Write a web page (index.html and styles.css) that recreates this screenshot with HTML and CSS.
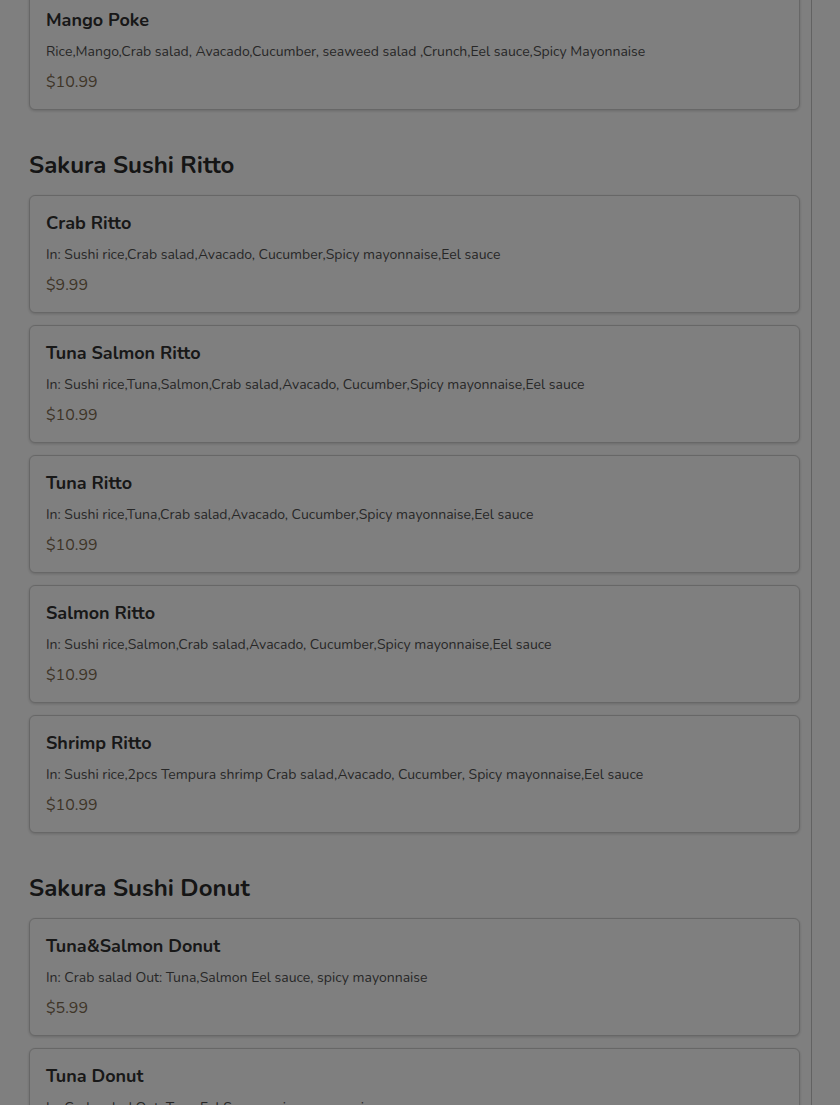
FILE: index.html
```html
<!DOCTYPE html>
<html lang="en">
<head>
<meta charset="utf-8">
<title>Sakura Sushi Menu</title>
<link rel="stylesheet" href="styles.css">
</head>
<body>
<div class="page">
  <main class="menu">
    <section class="category first">
      <div class="item">
        <h3 class="item-name">Mango Poke</h3>
        <p class="item-desc">Rice,Mango,Crab salad, Avacado,Cucumber, seaweed salad ,Crunch,Eel sauce,Spicy Mayonnaise</p>
        <p class="item-price">$10.99</p>
      </div>
    </section>
    <section class="category">
      <h2 class="category-title">Sakura Sushi Ritto</h2>
      <div class="item">
        <h3 class="item-name">Crab Ritto</h3>
        <p class="item-desc">In: Sushi rice,Crab salad,Avacado, Cucumber,Spicy mayonnaise,Eel sauce</p>
        <p class="item-price">$9.99</p>
      </div>
      <div class="item">
        <h3 class="item-name">Tuna Salmon Ritto</h3>
        <p class="item-desc">In: Sushi rice,Tuna,Salmon,Crab salad,Avacado, Cucumber,Spicy mayonnaise,Eel sauce</p>
        <p class="item-price">$10.99</p>
      </div>
      <div class="item">
        <h3 class="item-name">Tuna Ritto</h3>
        <p class="item-desc">In: Sushi rice,Tuna,Crab salad,Avacado, Cucumber,Spicy mayonnaise,Eel sauce</p>
        <p class="item-price">$10.99</p>
      </div>
      <div class="item">
        <h3 class="item-name">Salmon Ritto</h3>
        <p class="item-desc">In: Sushi rice,Salmon,Crab salad,Avacado, Cucumber,Spicy mayonnaise,Eel sauce</p>
        <p class="item-price">$10.99</p>
      </div>
      <div class="item">
        <h3 class="item-name">Shrimp Ritto</h3>
        <p class="item-desc">In: Sushi rice,2pcs Tempura shrimp Crab salad,Avacado, Cucumber, Spicy mayonnaise,Eel sauce</p>
        <p class="item-price">$10.99</p>
      </div>
    </section>
    <section class="category">
      <h2 class="category-title">Sakura Sushi Donut</h2>
      <div class="item">
        <h3 class="item-name">Tuna&amp;Salmon Donut</h3>
        <p class="item-desc">In: Crab salad Out: Tuna,Salmon Eel sauce, spicy mayonnaise</p>
        <p class="item-price">$5.99</p>
      </div>
      <div class="item">
        <h3 class="item-name">Tuna Donut</h3>
        <p class="item-desc">In: Crab salad Out: Tuna Eel Sauce, spicy mayonnaise</p>
        <p class="item-price">$5.99</p>
      </div>
    </section>
  </main>
</div>
<div class="backdrop"></div>
</body>
</html>
```

FILE: styles.css
```css
* { box-sizing: border-box; }
html, body {
  margin: 0;
  padding: 0;
  background: #ffffff;
  height: 1105px;
  overflow: hidden;
}
body {
  font-family: "Nunito", "Lato", "Noto Sans", sans-serif;
  color: #333333;
}
.page {
  display: flex;
}
.menu {
  width: 812px;
  padding: 0 11px 0 29px;
  border-right: 1px solid #c4c4c4;
  margin-top: -8px;
  min-height: 1200px;
}
.category {
  display: flex;
  flex-direction: column;
  gap: 12px;
}
.category-title {
  margin: 39px 0 2px;
  font-size: 24px;
  line-height: 32px;
  font-weight: 700;
  color: #2b2b2b;
}
.item {
  background: #ffffff;
  border: 1px solid #cfcfcf;
  border-radius: 6px;
  box-shadow: 0 1px 3px rgba(0, 0, 0, 0.18);
  padding: 15px 16px 16px;
}
.item-name {
  margin: 0;
  font-size: 18px;
  line-height: 24px;
  font-weight: 700;
  color: #303030;
}
.item-desc {
  margin: 10px 0 0;
  font-size: 14px;
  line-height: 20px;
  color: #4f4f4f;
}
.item-price {
  margin: 9px 0 0;
  font-size: 16px;
  line-height: 22px;
  color: #7d6a4f;
}
.backdrop {
  position: fixed;
  inset: 0;
  background: rgba(0, 0, 0, 0.5);
}
```
